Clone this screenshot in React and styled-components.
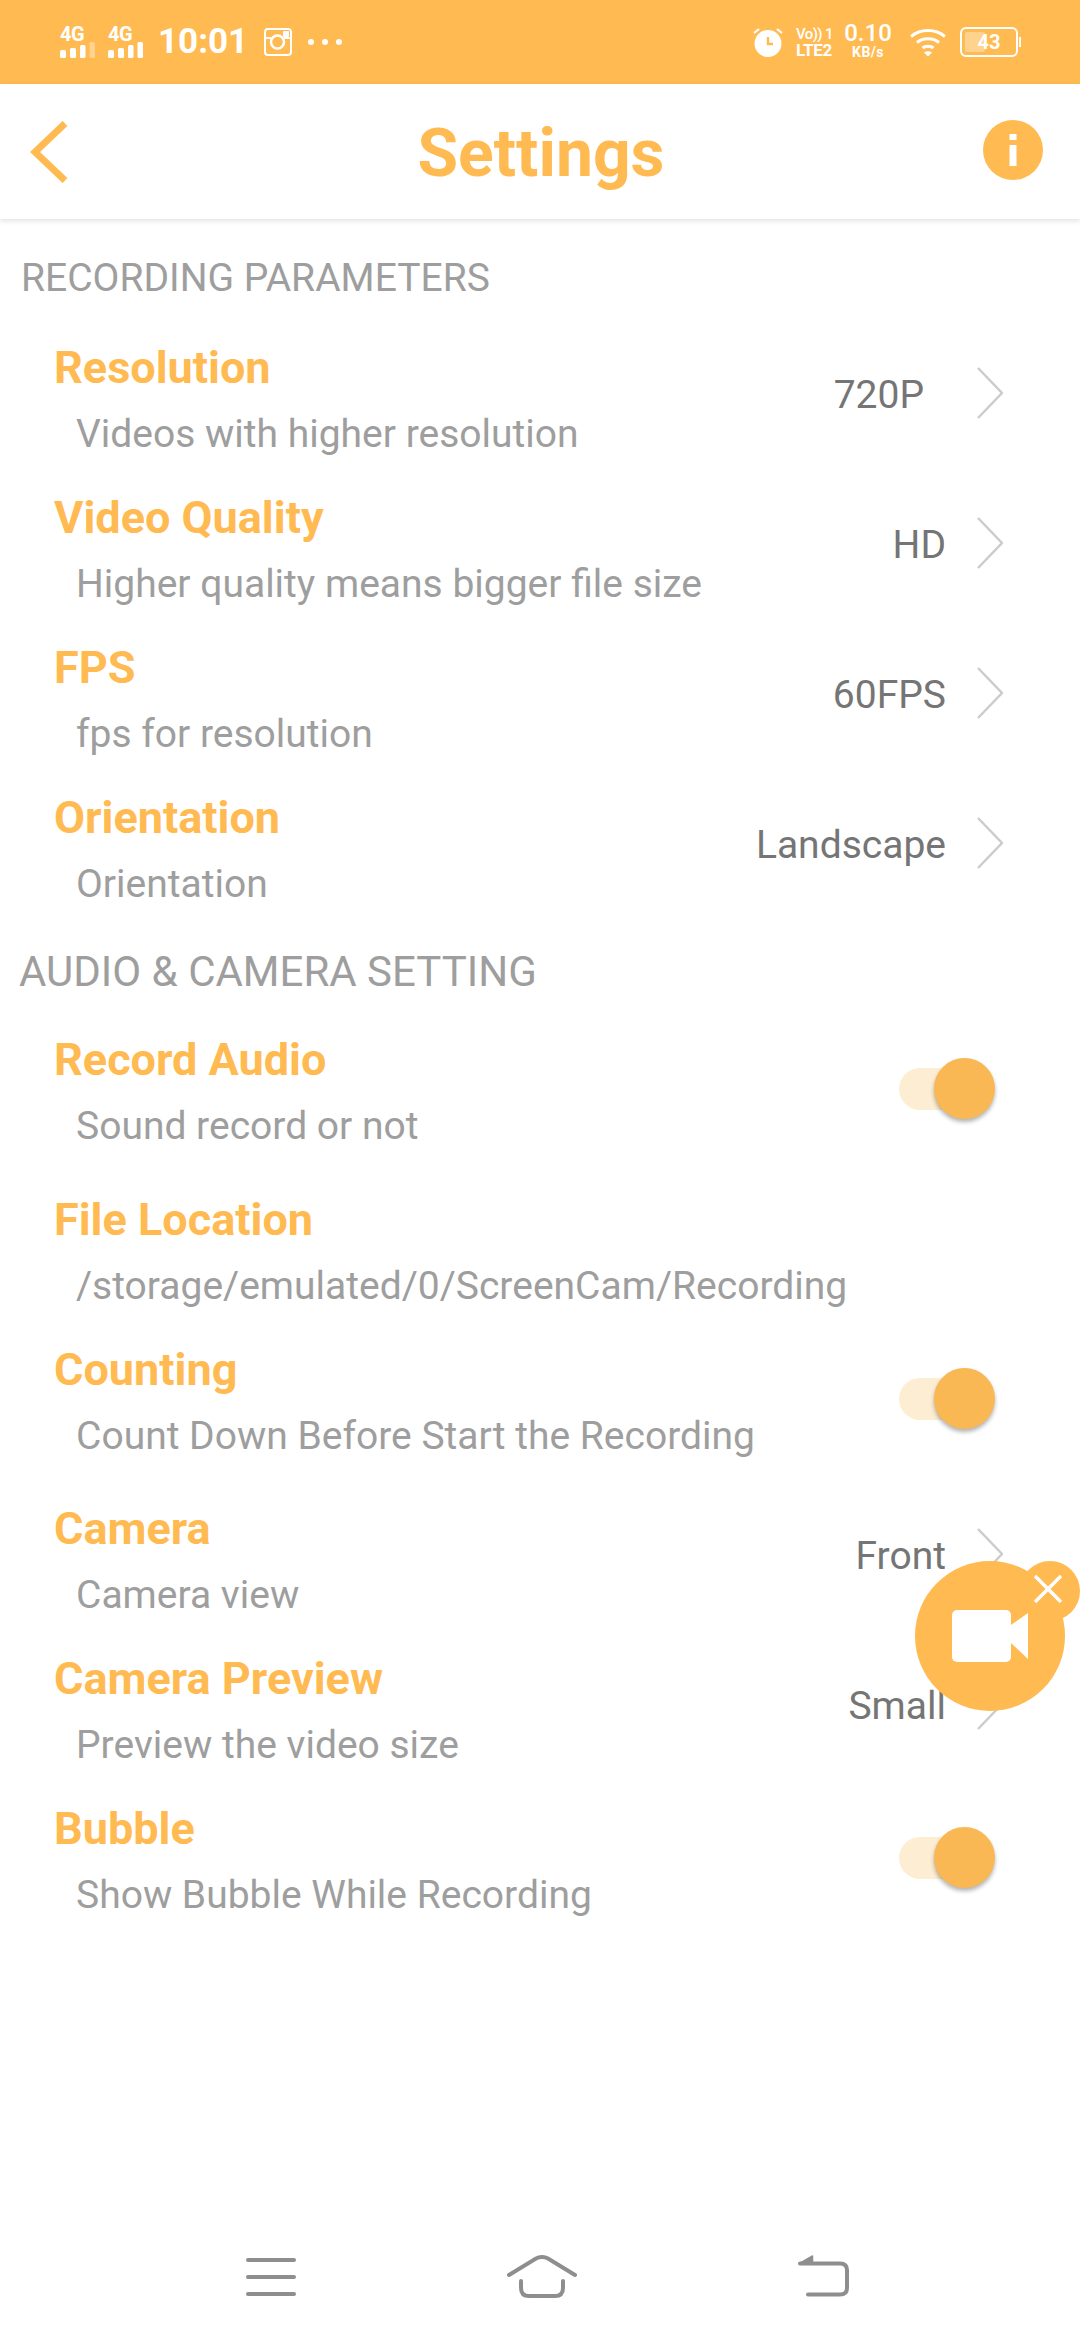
import React from "react";
import styled, { createGlobalStyle } from "styled-components";

const ORANGE = "#ffba52";

const GlobalStyle = createGlobalStyle`
  html, body {
    margin: 0;
    padding: 0;
    background: #fff;
    font-family: Roboto, "Liberation Sans", sans-serif;
  }
`;

const Page = styled.div`
  position: relative;
  width: 1080px;
  height: 2340px;
  overflow: hidden;
  display: flex;
  flex-direction: column;
  background: #fff;
`;

// status bar
const StatusBar = styled.div`
  height: 84px;
  flex: none;
  background: ${ORANGE};
  color: #fff;
  display: flex;
  align-items: center;
  justify-content: space-between;
  padding: 0 60px;
`;
const StatusSide = styled.div`
  display: flex;
  align-items: center;
`;
const SignalBox = styled.div`
  width: 35px;
  margin-right: 13px;
  display: flex;
  flex-direction: column;
  height: 32px;
`;
const SignalLabel = styled.span`
  font-size: 20px;
  font-weight: 700;
  line-height: 16px;
  height: 16px;
  letter-spacing: -0.5px;
`;
const Time = styled.span`
  font-size: 35px;
  font-weight: 700;
  margin: 0 16px 0 2px;
  line-height: 40px;
`;
const Dots = styled.span`
  display: flex;
  gap: 8px;
  margin-left: 16px;
  i {
    width: 6px;
    height: 6px;
    border-radius: 50%;
    background: #fff;
  }
`;
const VolteBox = styled.div`
  width: 38px;
  margin: 0 10px 0 13px;
  display: flex;
  flex-direction: column;
  font-weight: 500;
  white-space: nowrap;
`;
const VolteTop = styled.span`
  font-size: 15px;
  line-height: 15px;
  letter-spacing: -0.6px;
`;
const VolteBottom = styled.span`
  font-size: 17px;
  line-height: 16px;
  font-weight: 700;
  letter-spacing: -0.3px;
`;
const Speed = styled.div`
  width: 48px;
  margin-right: 18px;
  display: flex;
  flex-direction: column;
  align-items: center;
  margin-top: -6px;
`;
const SpeedValue = styled.span`
  font-size: 24px;
  font-weight: 500;
  line-height: 26px;
`;
const SpeedUnit = styled.span`
  font-size: 14px;
  font-weight: 700;
  line-height: 13px;
  letter-spacing: 0.4px;
`;
const Battery = styled.div`
  position: relative;
  width: 58px;
  height: 30px;
  margin-left: 14px;
  margin-right: 2px;
  border: 2px solid #fff;
  border-radius: 6px;
  box-sizing: border-box;
  display: flex;
  align-items: center;
  justify-content: center;
  font-size: 20px;
  font-weight: 700;
  &::before {
    content: "";
    position: absolute;
    left: 3px;
    top: 3px;
    bottom: 3px;
    width: 20px;
    border-radius: 2px;
    background: rgba(255, 255, 255, 0.35);
  }
  &::after {
    content: "";
    position: absolute;
    right: -5px;
    top: 8px;
    width: 2px;
    height: 10px;
    background: #fff;
  }
`;

// header
const Header = styled.header`
  height: 135px;
  flex: none;
  display: grid;
  grid-template-columns: 1fr auto 1fr;
  align-items: center;
  padding: 0 37px 0 30px;
  background: #fff;
  box-shadow: 0 2px 5px rgba(0, 0, 0, 0.12);
  position: relative;
`;
const Title = styled.h1`
  margin: 5px 0 0 9px;
  font-size: 66px;
  font-weight: 700;
  color: ${ORANGE};
  line-height: 70px;
`;
const InfoBadge = styled.div`
  justify-self: end;
  width: 60px;
  height: 60px;
  margin-top: -3px;
  border-radius: 50%;
  background: ${ORANGE};
  display: flex;
  align-items: center;
  justify-content: center;
`;

// settings list
const SectionLabel = styled.div`
  box-sizing: border-box;
  height: ${(p) => p.$height}px;
  padding-top: ${(p) => p.$top}px;
  padding-left: ${(p) => p.$left}px;
  font-size: ${(p) => p.$size}px;
  line-height: 48px;
  color: #9e9e9e;
`;
const Row = styled.div`
  box-sizing: border-box;
  height: ${(p) => p.$height || 150}px;
  padding: 17px 77px 0 54px;
  display: flex;
  justify-content: space-between;
  align-items: flex-start;
`;
const RowText = styled.div`
  display: flex;
  flex-direction: column;
  gap: 18px;
`;
const RowTitle = styled.div`
  font-size: 45px;
  font-weight: 700;
  line-height: 48px;
  color: ${ORANGE};
`;
const RowSub = styled.div`
  font-size: 39px;
  line-height: 48px;
  color: #9e9e9e;
  margin-left: 22px;
`;
const RowValue = styled.div`
  height: 98px;
  display: flex;
  align-items: center;
  gap: 31px;
`;
const ValueText = styled.span`
  margin: 3px ${(p) => p.$shift || 0}px 0 0;
  font-size: 39px;
  color: #757575;
`;
const Switch = styled.div`
  position: relative;
  width: 96px;
  height: 61px;
  margin: 22px 8px 0 0;
  &::before {
    content: "";
    position: absolute;
    left: 0;
    top: 10px;
    width: 84px;
    height: 42px;
    border-radius: 21px;
    background: #fdeed3;
  }
  &::after {
    content: "";
    position: absolute;
    right: 0;
    top: 0;
    width: 61px;
    height: 61px;
    border-radius: 50%;
    background: #f9b853;
    box-shadow: 0 3px 4px rgba(0, 0, 0, 0.3);
  }
`;

// floating record bubble
const Bubble = styled.div`
  position: absolute;
  left: 915px;
  top: 1561px;
  width: 150px;
  height: 150px;
  border-radius: 50%;
  background: ${ORANGE};
  display: flex;
  align-items: center;
  justify-content: center;
`;
const BubbleClose = styled.div`
  position: absolute;
  left: 105px;
  top: 0;
  width: 60px;
  height: 60px;
  box-sizing: border-box;
  padding: 0 4px 4px 0;
  border-radius: 50%;
  background: ${ORANGE};
  display: flex;
  align-items: center;
  justify-content: center;
`;

// nav bar
const NavBar = styled.nav`
  margin-top: auto;
  height: 43px;
  margin-bottom: 42px;
  flex: none;
  display: flex;
  align-items: center;
  padding-left: 246px;
`;
const NavSlot = styled.div`
  display: flex;
  margin-left: ${(p) => p.$gap || 0}px;
`;

const Signal = ({ full }) => (
  <svg width="35" height="16" viewBox="0 0 35 16">
    <rect x="0" y="8" width="6" height="8" rx="1.5" fill="#fff" />
    <rect x="10" y="6" width="6" height="10" rx="1.5" fill="#fff" />
    <rect x="20" y="3" width="5.5" height="13" rx="1.5" fill="#fff" />
    <rect x="29.5" y="0" width="5.5" height="16" rx="1.5" fill="#fff" opacity={full ? 1 : 0.35} />
  </svg>
);

const Instagram = () => (
  <svg width="28" height="28" viewBox="0 0 28 28">
    <rect x="1" y="1" width="26" height="26" rx="3" fill="none" stroke="#fff" strokeWidth="2" />
    <circle cx="13.5" cy="14" r="6.5" fill="none" stroke="#fff" strokeWidth="2.5" />
    <path d="M1 10h6M20 10h7" stroke="#fff" strokeWidth="2" />
    <rect x="19" y="3" width="6" height="6" rx="1" fill="#fff" />
  </svg>
);

const Alarm = () => (
  <svg width="30" height="30" viewBox="0 0 30 30">
    <circle cx="15" cy="16.5" r="13.5" fill="#fff" />
    <path d="M1 6l5-4M29 6l-5-4" stroke="#fff" strokeWidth="2.2" />
    <path d="M15 10v7h5" fill="none" stroke={ORANGE} strokeWidth="2.4" />
  </svg>
);

const Wifi = () => (
  <svg width="36" height="29" viewBox="0 0 36 29">
    <path d="M1 8.5C10.5 0.5 25.5 0.5 35 8.5" fill="none" stroke="#fff" strokeWidth="3" />
    <path d="M7 14.5C13 9.5 23 9.5 29 14.5" fill="none" stroke="#fff" strokeWidth="3" />
    <path d="M12.5 20C15.5 17.5 20.5 17.5 23.5 20" fill="none" stroke="#fff" strokeWidth="3" />
    <path d="M14 24.5C16.5 22.8 19.5 22.8 22 24.5L18 28.5Z" fill="#fff" />
  </svg>
);

const BackArrow = () => (
  <svg width="38" height="62" viewBox="0 0 38 62">
    <path d="M35 2.5L5 31l30 28.5" fill="none" stroke={ORANGE} strokeWidth="7" />
  </svg>
);

const Chevron = () => (
  <svg width="26" height="52" viewBox="0 0 26 52">
    <path d="M1 1l24 25L1 51" fill="none" stroke="#ccc" strokeWidth="2.5" />
  </svg>
);

const Camera = () => (
  <svg width="76" height="52" viewBox="0 0 76 52">
    <rect x="0" y="0" width="59" height="52" rx="5" fill="#fff" />
    <path d="M59 15L76 3V49L59 33Z" fill="#fff" />
  </svg>
);

const Close = () => (
  <svg width="28" height="28" viewBox="0 0 28 28">
    <path d="M1 1l26 26M27 1L1 27" stroke="#fff" strokeWidth="3.5" />
  </svg>
);

const MenuIcon = () => (
  <svg width="50" height="38" viewBox="0 0 50 38">
    <path d="M2 2h46M2 19h46M2 36h46" stroke="#8e8e8e" strokeWidth="4" strokeLinecap="round" />
  </svg>
);

const HomeIcon = () => (
  <svg width="70" height="43" viewBox="0 0 70 43">
    <path d="M2 20L29 3.5Q35 0.5 41 3.5L68 20" fill="none" stroke="#8e8e8e" strokeWidth="4" strokeLinecap="round" />
    <path d="M14 26V33Q14 41 22 41H48Q56 41 56 33V26" fill="none" stroke="#8e8e8e" strokeWidth="4" strokeLinecap="round" />
  </svg>
);

const ReturnIcon = () => (
  <svg width="52" height="43" viewBox="0 0 52 43">
    <path d="M1.5 8.5L14.5 1V8.5Z" fill="#8e8e8e" stroke="#8e8e8e" strokeWidth="1.5" strokeLinejoin="round" />
    <path d="M2 8.5H42Q49 8.5 49 15V33Q49 39.5 42 39.5H10" fill="none" stroke="#8e8e8e" strokeWidth="4" strokeLinecap="round" />
  </svg>
);

const firstGroup = [
  { title: "Resolution", sub: "Videos with higher resolution", value: "720P", shift: 22 },
  { title: "Video Quality", sub: "Higher quality means bigger file size", value: "HD" },
  { title: "FPS", sub: "fps for resolution", value: "60FPS" },
  { title: "Orientation", sub: "Orientation", value: "Landscape" },
];

const secondGroup = [
  { title: "Record Audio", sub: "Sound record or not", toggle: true, height: 160 },
  { title: "File Location", sub: "/storage/emulated/0/ScreenCam/Recording" },
  { title: "Counting", sub: "Count Down Before Start the Recording", toggle: true, height: 159 },
  { title: "Camera", sub: "Camera view", value: "Front" },
  { title: "Camera Preview", sub: "Preview the video size", value: "Small" },
  { title: "Bubble", sub: "Show Bubble While Recording", toggle: true },
];

const SettingRow = ({ title, sub, value, shift, toggle, height }) => (
  <Row $height={height}>
    <RowText>
      <RowTitle>{title}</RowTitle>
      <RowSub>{sub}</RowSub>
    </RowText>
    {value && (
      <RowValue>
        <ValueText $shift={shift}>{value}</ValueText>
        <Chevron />
      </RowValue>
    )}
    {toggle && <Switch />}
  </Row>
);

const App = () => {
  return (
    <Page>
      <GlobalStyle />
      <StatusBar>
        <StatusSide>
          <SignalBox>
            <SignalLabel>4G</SignalLabel>
            <Signal />
          </SignalBox>
          <SignalBox>
            <SignalLabel>4G</SignalLabel>
            <Signal full />
          </SignalBox>
          <Time>10:01</Time>
          <Instagram />
          <Dots>
            <i />
            <i />
            <i />
          </Dots>
        </StatusSide>
        <StatusSide>
          <Alarm />
          <VolteBox>
            <VolteTop>Vo)) 1</VolteTop>
            <VolteBottom>LTE2</VolteBottom>
          </VolteBox>
          <Speed>
            <SpeedValue>0.10</SpeedValue>
            <SpeedUnit>KB/s</SpeedUnit>
          </Speed>
          <Wifi />
          <Battery>43</Battery>
        </StatusSide>
      </StatusBar>
      <Header>
        <BackArrow />
        <Title>Settings</Title>
        <InfoBadge>
          <svg width="12" height="32" viewBox="0 0 12 32">
            <path d="M2.5 0h7v6h-7zM2.5 11h7v21h-7z" fill="#fff" />
          </svg>
        </InfoBadge>
      </Header>
      <SectionLabel $height={108} $top={35} $left={21} $size={39}>
        RECORDING PARAMETERS
      </SectionLabel>
      {firstGroup.map((item) => (
        <SettingRow key={item.title} {...item} />
      ))}
      <SectionLabel $height={92} $top={21} $left={19} $size={42}>
        AUDIO &amp; CAMERA SETTING
      </SectionLabel>
      {secondGroup.map((item) => (
        <SettingRow key={item.title} {...item} />
      ))}
      <NavBar>
        <MenuIcon />
        <NavSlot $gap={211}>
          <HomeIcon />
        </NavSlot>
        <NavSlot $gap={221}>
          <ReturnIcon />
        </NavSlot>
      </NavBar>
      <Bubble>
        <Camera />
        <BubbleClose>
          <Close />
        </BubbleClose>
      </Bubble>
    </Page>
  );
};

export default App;
